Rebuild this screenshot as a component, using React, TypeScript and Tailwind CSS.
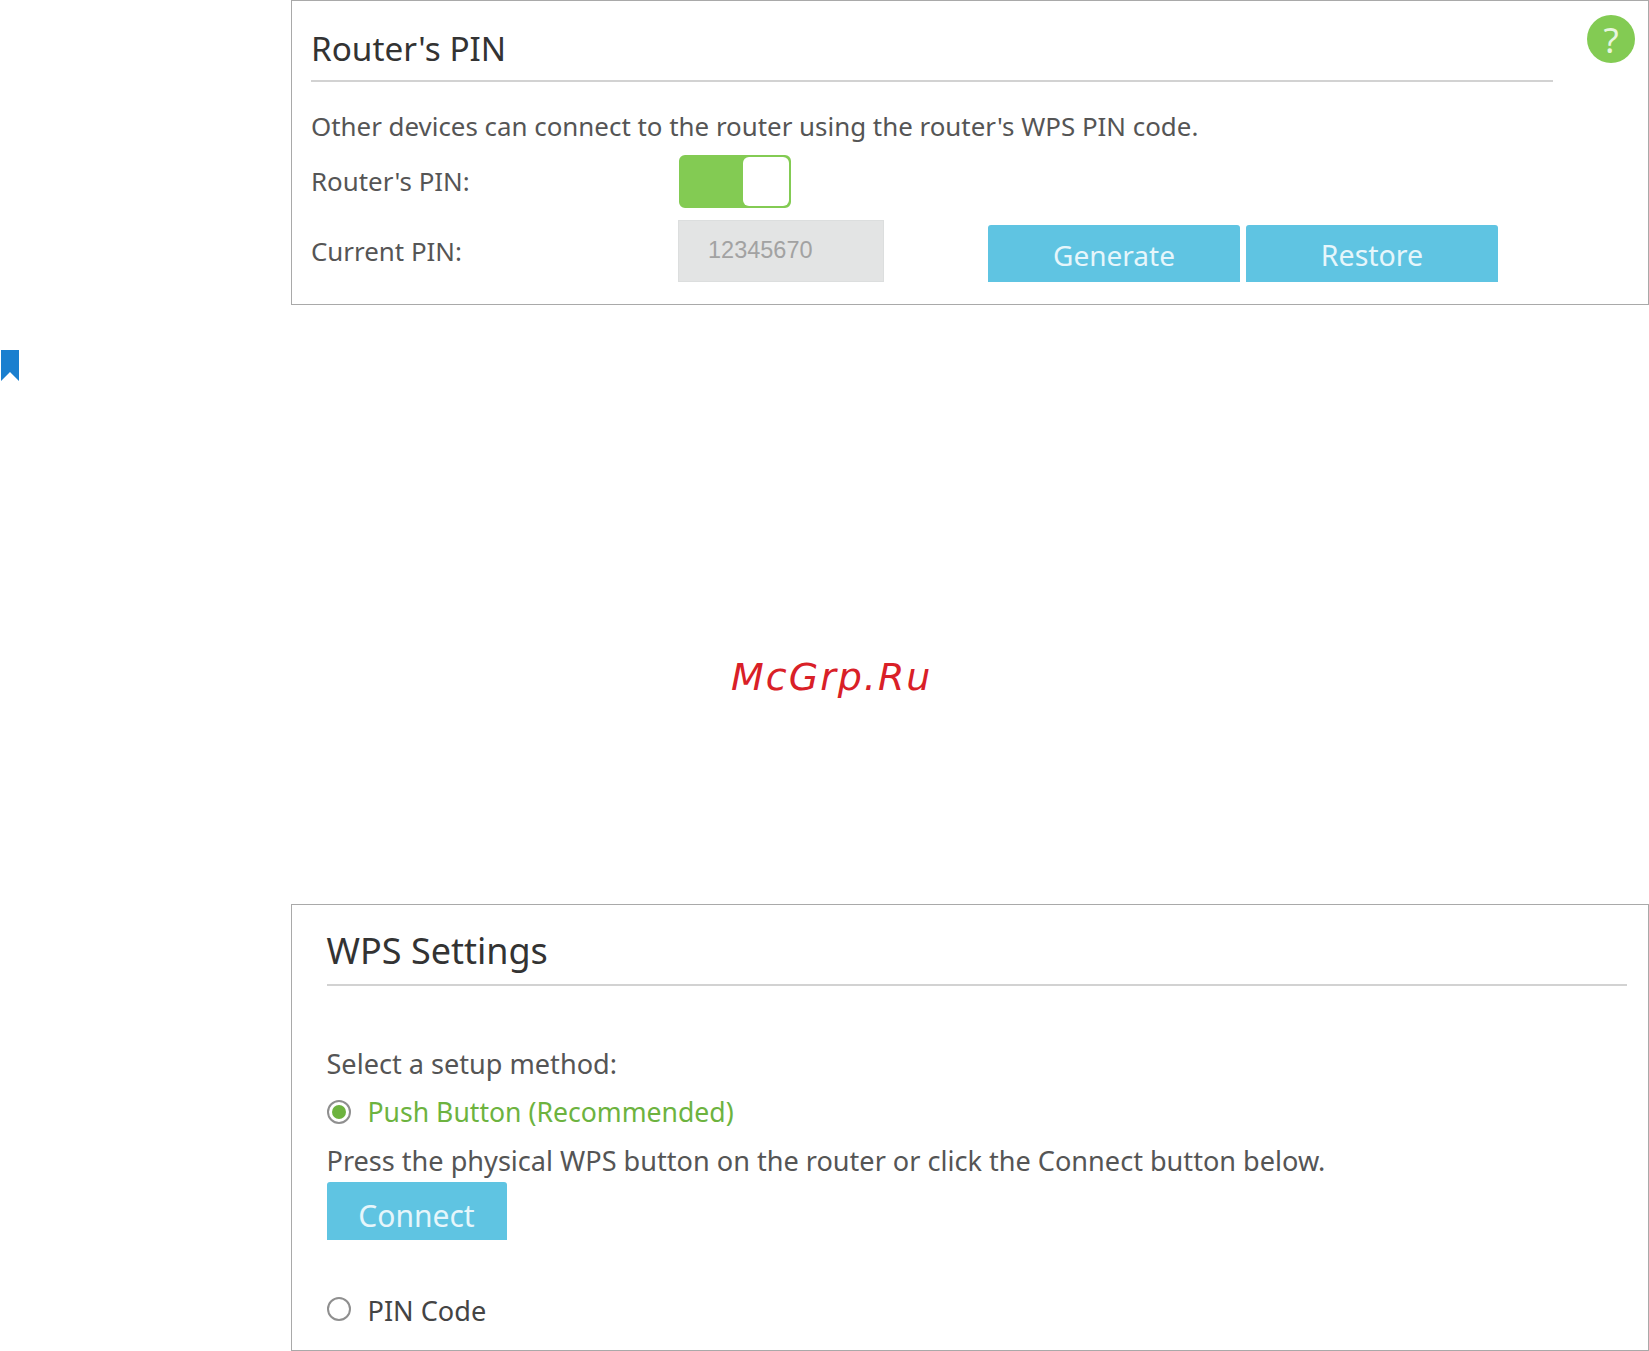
import React from 'react';

const font = { fontFamily: '"Noto Sans", sans-serif' };

function PanelTitle({ children, className }: { children: React.ReactNode; className: string }) {
    return (
        <h2 className={`border-b-2 border-[#d2d2d2] leading-[46px] text-[#333333] ${className}`}>{children}</h2>
    );
}

function Radio({ checked }: { checked?: boolean }) {
    return (
        <span className="flex h-[24px] w-[24px] shrink-0 items-center justify-center rounded-full border-2 border-[#8f8f8f] bg-white">
            {checked && <span className="h-[14px] w-[14px] rounded-full bg-[#6db33f]" />}
        </span>
    );
}

function BlueButton({ label, className }: { label: string; className: string }) {
    return (
        <button className={`rounded-t-[3px] bg-[#5fc4e2] text-center leading-none text-[#e6f6fb] ${className}`}>
            {label}
        </button>
    );
}

export default function App() {
    return (
        <div className="relative h-[1351px] w-[1649px] overflow-hidden bg-white text-[#555555]" style={font}>
            <section className="relative ml-[291px] h-[305px] border border-[#a9a9a9] pl-[19px] pr-[95px] pt-[24px] text-[25.9px]">
                <PanelTitle className="h-[57px] text-[33.3px]">Router's PIN</PanelTitle>
                <p className="mt-[26px] leading-[36px]">Other devices can connect to the router using the router's WPS PIN code.</p>
                <div className="mt-[11px] flex h-[53px] items-center">
                    <span className="w-[368px]">Router's PIN:</span>
                    <div className="flex h-[53px] w-[112px] justify-end rounded-[6px] border-2 border-[#83cb53] bg-[#83cb53]">
                        <div className="w-[46px] rounded-[6px] bg-white" />
                    </div>
                </div>
                <div className="mt-[12px] flex h-[62px] items-center">
                    <span className="w-[367px]">Current PIN:</span>
                    <div className="flex h-[62px] w-[206px] items-center border border-[#dcdede] bg-[#e3e4e4] pl-[29px] text-[23.5px] text-[#a2a2a2]" style={{ fontFamily: '"Liberation Sans", sans-serif' }}>
                        12345670
                    </div>
                    <div className="ml-[104px] flex gap-[6px] self-end">
                        <BlueButton label="Generate" className="h-[57px] w-[252px] pt-[3px] text-[28px]" />
                        <BlueButton label="Restore" className="h-[57px] w-[252px] pt-[3px] text-[28.5px]" />
                    </div>
                </div>
                <div className="absolute right-[13px] top-[14px] flex h-[48px] w-[48px] items-center justify-center rounded-full bg-[#83cb53] text-[35px] leading-none text-[#e8f6df]">?</div>
            </section>

            <svg className="ml-[1px] mt-[45px] block" width="18" height="31" viewBox="0 0 18 31">
                <path d="M0 0H18V31L9 22L0 31Z" fill="#1a7fcf" />
            </svg>

            <div className="absolute left-[731px] top-[650px] text-[38px] italic leading-[54px] tracking-[2px] text-[#d92027]" style={{ fontFamily: '"DejaVu Sans", sans-serif' }}>McGrp.Ru</div>

            <section className="ml-[291px] mt-[523px] h-[447px] border border-[#a9a9a9] pl-[34.5px] pr-[21px] pt-[23px] text-[27.1px]">
                <PanelTitle className="h-[58px] text-[36px]">WPS Settings</PanelTitle>
                <p className="mt-[60px] leading-[36px]">Select a setup method:</p>
                <label className="mt-[12px] flex h-[36px] items-center gap-[17px] text-[26.6px] text-[#6db33f]">
                    <Radio checked />
                    <span className="pt-[2px]">Push Button (Recommended)</span>
                </label>
                <p className="mt-[13px] leading-[36px]">Press the physical WPS button on the router or click the Connect button below.</p>
                <BlueButton label="Connect" className="mt-[3px] block h-[58px] w-[180px] pt-[9px] text-[30px]" />
                <label className="mt-[51px] flex h-[36px] items-center gap-[17px] text-[#444444]">
                    <Radio />
                    <span className="pt-[4px]">PIN Code</span>
                </label>
            </section>
        </div>
    );
}
